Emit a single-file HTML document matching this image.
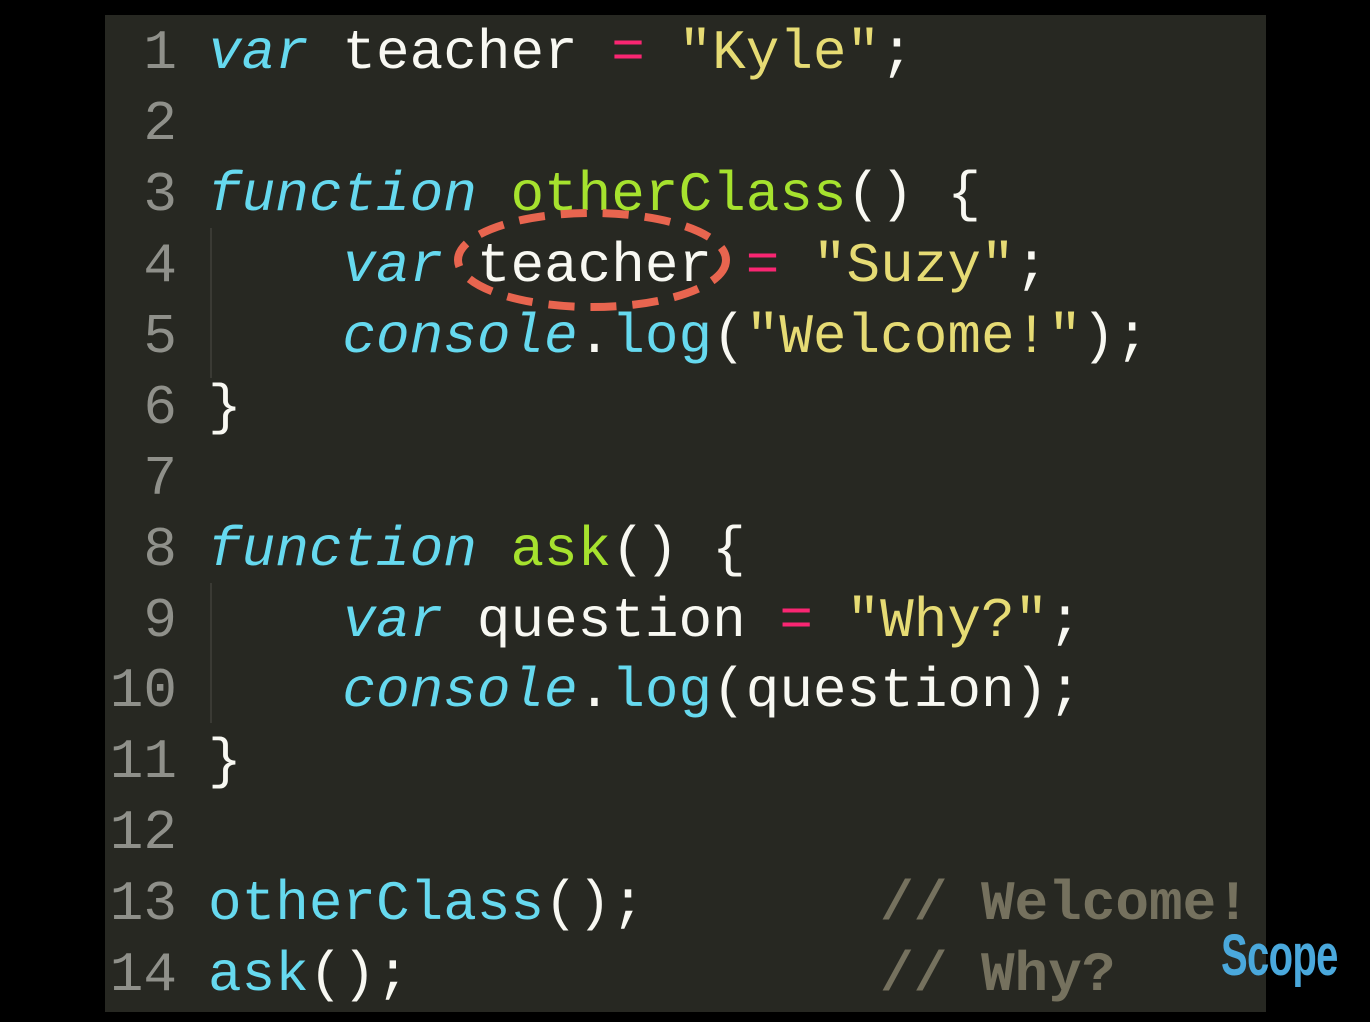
<!DOCTYPE html>
<html><head><meta charset="utf-8"><style>
html,body{margin:0;padding:0;background:#000;width:1370px;height:1022px;overflow:hidden}
#p{position:absolute;left:105px;top:15px;width:1161px;height:997px;background:#272822}
.l{position:absolute;left:0;height:71px;line-height:71px;font-family:"Liberation Mono",monospace;font-size:56px;color:#f8f8f2;white-space:pre;margin-top:3px}
.n{position:absolute;left:0;width:72px;text-align:right;color:#8f908a}
.c{position:absolute;left:103px}
.k{color:#66d9ef;font-style:italic}
.b{color:#66d9ef}
.f{color:#a6e22e}
.s{color:#e6db74}
.o{color:#f92672}
.m{color:#75715e;font-weight:bold}
.g{position:absolute;left:105px;width:2px;background:#3a3a34}
#scope{position:absolute;left:1221px;top:922px;font-family:"Liberation Sans",sans-serif;font-weight:bold;font-size:58px;color:#4aa8dc;transform:scaleX(0.69);transform-origin:left top;letter-spacing:-1px}
</style></head><body>
<div id="p">
<div class="g" style="top:213px;height:150px"></div>
<div class="g" style="top:568px;height:140px"></div>
<div class="l" style="top:0px"><span class="n">1</span><span class="c"><span class="k">var</span> teacher <span class="o">=</span> <span class="s">"Kyle"</span>;</span></div>
<div class="l" style="top:71px"><span class="n">2</span></div>
<div class="l" style="top:142px"><span class="n">3</span><span class="c"><span class="k">function</span> <span class="f">otherClass</span>() {</span></div>
<div class="l" style="top:213px"><span class="n">4</span><span class="c">    <span class="k">var</span> teacher <span class="o">=</span> <span class="s">"Suzy"</span>;</span></div>
<div class="l" style="top:284px"><span class="n">5</span><span class="c">    <span class="k">console</span>.<span class="b">log</span>(<span class="s">"Welcome!"</span>);</span></div>
<div class="l" style="top:355px"><span class="n">6</span><span class="c">}</span></div>
<div class="l" style="top:426px"><span class="n">7</span></div>
<div class="l" style="top:497px"><span class="n">8</span><span class="c"><span class="k">function</span> <span class="f">ask</span>() {</span></div>
<div class="l" style="top:568px"><span class="n">9</span><span class="c">    <span class="k">var</span> question <span class="o">=</span> <span class="s">"Why?"</span>;</span></div>
<div class="l" style="top:638px"><span class="n">10</span><span class="c">    <span class="k">console</span>.<span class="b">log</span>(question);</span></div>
<div class="l" style="top:709px"><span class="n">11</span><span class="c">}</span></div>
<div class="l" style="top:780px"><span class="n">12</span></div>
<div class="l" style="top:851px"><span class="n">13</span><span class="c"><span class="b">otherClass</span>();       <span class="m">// Welcome!</span></span></div>
<div class="l" style="top:922px"><span class="n">14</span><span class="c"><span class="b">ask</span>();              <span class="m">// Why?</span></span></div>
</div>
<svg style="position:absolute;left:0;top:0" width="1370" height="1022"><ellipse cx="592" cy="260" rx="134" ry="47" fill="none" stroke="#e8654f" stroke-width="8" stroke-dasharray="26 16"/></svg>
<div id="scope">Scope</div>
</body></html>
